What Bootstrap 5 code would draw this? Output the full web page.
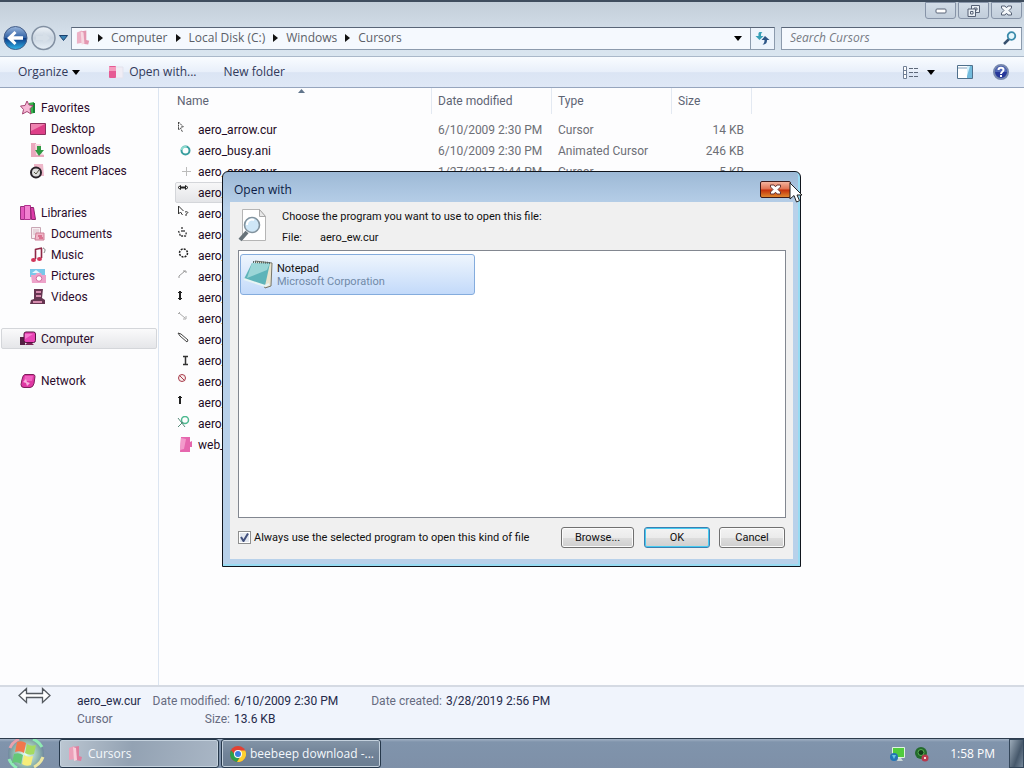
<!DOCTYPE html>
<html lang="en">
<head>
<meta charset="utf-8">
<meta name="viewport" content="width=device-width, initial-scale=1">
<title>Cursors</title>
<link href="https://cdn.jsdelivr.net/npm/bootstrap@5.3.0/dist/css/bootstrap.min.css" rel="stylesheet">
<style>
body{font-family:Roboto,"Open Sans",sans-serif;font-size:12px;line-height:16px;color:#1e1e2c;background:#fdfdfe}
svg{display:block;flex:none}
button{font-family:inherit;white-space:nowrap}
a{color:inherit;text-decoration:none}
.plain-btn{background:none;border:0;padding:0;color:inherit}
.window-top{background:linear-gradient(#c3ced9,#d3dee9 30px,#dae6f0);border-top:2px solid #3f4d5e;height:56px;font-family:"Open Sans",sans-serif}
.caption-row{height:17px;padding-right:2px;gap:2px}
.caption-btn{width:31px;height:17px;border:1px solid #8794a8;border-radius:0 0 3px 3px;background:linear-gradient(#d2dce7,#c2cedb);padding:0}
.nav-row{height:38px;padding:0 2px 0 3px}
.nav-row .plain-btn + .plain-btn{margin-left:3px}
.path-box{height:23px;border:1px solid #8c9bad;border-top-color:#596577;background:#f5f9fe;color:#5b5f68;margin-left:3px}
.path-box nav{gap:8px;margin-left:7px}
.refresh-btn{width:24px;height:21px;border:0;border-left:1px solid #8c9bad;background:#edf4fc;padding:0}
.search-box{width:241px;height:23px;border:1px solid #8c9bad;border-top-color:#596577;background:#f5f9fe;margin-left:6px}
.search-box input{border:0;background:none;outline:0;font-style:italic;min-width:0}
.search-box input::placeholder{color:#777b84;opacity:1}
.tool-row{height:32px;border-top:1px solid #aab8c9;border-bottom:1px solid #96a5bd;background:linear-gradient(#f9fcff,#e8effa 50%,#dbe5f4 52%,#dfe8f6);color:#31395a;padding:0 15px 0 18px;font-family:"Open Sans",sans-serif}
.tool-row .spaced{margin-left:27px}
.tool-row .view-more{margin:0 22px 0 8px}
.side{width:159px;border-right:1px solid #dce5f1;padding-top:9px}
.side a{height:21px;display:flex;align-items:center;gap:5px;padding-left:20px;color:#2c0b2c}
.side a.sub{padding-left:30px}
.side .group{margin-bottom:21px}
.side a.current{background:linear-gradient(#fafafb,#e5e6e9);border:1px solid #d4d6da;border-radius:2px;margin:0 1px;padding-left:18px}
.files{width:583px;table-layout:fixed;border-collapse:separate;border-spacing:0;margin-left:10px;color:#6d6f76}
.files th{height:26px;font-weight:400;padding:0 0 0 6px;border-right:1px solid #e3e9f2;color:#5d6474}
.files th:first-child{padding-left:8px}
.files tbody tr:first-child td{border-top:5px solid transparent;height:26px}
.files td{height:21px;padding:0 0 0 6px;white-space:nowrap}
.files td:last-child{text-align:right;padding-right:8px}
.files td:first-child{color:#1e0a24}
.file-name{height:21px;margin-right:2px;gap:6px;border:1px solid transparent;border-radius:2px}
.file-name.picked{background:linear-gradient(#f7f7f8,#e4e5e8);border-color:#d4d6da}
.sort-mark{top:1px;left:129px}
.details{height:53px;border-top:2px solid #d5dae3;background:#f0f4fc;color:#666b80;padding-left:18px;line-height:18px}
.details b{font-weight:400;color:#252a4a}
.details .facts{display:grid;grid-template-columns:75px 78px 136px 76px auto;grid-auto-rows:18px;white-space:nowrap;padding:5px 0 0 26px}
.taskbar{height:30px;border-top:1px solid #2d3b4d;background:linear-gradient(#a2b1c4,#8094ac 3px,#7e90a8);color:#fff;padding-left:6px;font-family:"Open Sans",sans-serif}
.task{width:160px;height:29px;border:1px solid #26384b;border-radius:3px;box-shadow:inset 0 0 0 1px #c4d1dd;background:linear-gradient(#8495a7,#718398 50%,#6a7d91);color:#f4f8fc;padding:0 8px;gap:4px;margin-right:2px}
.task.active{background:linear-gradient(100deg,#bcc7d2,#93a2b3 45%,#a9b6c5)}
.taskbar time{margin-right:14px}
.peek{width:15px;height:29px;border:1px solid #33465a;background:linear-gradient(110deg,#9cabb9,#46586b 60%,#76889b);padding:0}
.open-with{left:222px;top:171px;width:579px;border:1px solid #10151d;border-radius:6px 6px 0 0;background:linear-gradient(#9db9d6,#b9d1ea 36px,#b8d1ea);padding:0 7px 7px;box-shadow:inset -1px -1px 0 1px #98dcf3}
.open-with header{height:30px;color:#0b1c46;padding:7px 0 0 4px}
.open-with header span{padding-top:3px;font-family:"Open Sans",sans-serif}
.close-btn{width:31px;height:17px;margin:2px 2px 0 0;padding:0;border:1px solid #3f1b1b;border-radius:2px;background:linear-gradient(#f3b39e,#e0704f 48%,#c32e0c 52%,#df872e)}
.dialog-body{background:#f0f0f0;padding:7px 8px 11px;font-size:11px;color:#111}
.intro{height:41px}
.intro-text{padding-left:14px;line-height:21px;margin-top:-3px}
.intro-text span:first-child{width:38px}
.program-list{height:268px;background:#fff;border:1px solid #828790;padding:3px 1px;margin-right:-1px}
.program{width:235px;height:41px;border:1px solid #84acdd;border-radius:3px;background:linear-gradient(#eef5fd,#c3dafa);padding:0 0 0 2px;line-height:13px;text-align:left;color:#111;gap:3px}
.program small{font-size:11px;color:#718aa8}
.actions{padding-top:9px}
.dlg-btn{height:21px;padding:0;border:1px solid #707070;border-radius:3px;background:linear-gradient(#f3f3f3,#ebebeb 50%,#dddddd 52%,#cfcfcf);box-shadow:inset 0 0 0 1px #fbfbfb;width:66px;color:#111}
.dlg-btn.wide{width:73px;margin-right:10px}
.dlg-btn.ok{border-color:#3c7fb1;box-shadow:inset 0 0 0 1px #45cbf1;margin-right:9px}
.tick{appearance:none;width:13px;height:13px;margin:0;border:1px solid #8e8f8f;background:#e9edf3;box-shadow:inset 0 0 0 1px #fff}
.tick:checked{background:#e3e8f0 url("data:image/svg+xml,%3Csvg xmlns='http://www.w3.org/2000/svg' viewBox='0 0 11 11'%3E%3Cpath d='M2 5l2.500 4L9 1.500' fill='none' stroke='%23414f7c' stroke-width='2'/%3E%3C/svg%3E")}
.tick + label{margin-left:3px}
.pointer{left:789px;top:182px}
</style>
<script src="https://cdn.jsdelivr.net/npm/bootstrap@5.3.0/dist/js/bootstrap.bundle.min.js"></script>
</head>
<body class="d-flex flex-column vh-100 overflow-hidden position-relative">
<svg class="d-none">
<symbol id="folder" viewBox="0 0 16 16"><path d="M1 2l5-2 1 13-6 1z" fill="#eca0b9"/><path d="M5 1l6-1v10l3 1-1 4-6-1z" fill="#df7f9f"/><path d="M5 1l3 1 1 12-3 1z" fill="#f8cfdb"/></symbol>
<symbol id="crumb" viewBox="0 0 5 8"><path d="M0 0l5 4-5 4z" fill="#111"/></symbol>
<symbol id="down" viewBox="0 0 8 5"><path d="M0 0h8L4 5z"/></symbol>
</svg>

<div class="window-top flex-shrink-0">
  <div class="caption-row d-flex justify-content-end">
    <button class="caption-btn" aria-label="Minimize"><svg class="mx-auto" width="12" height="7" viewBox="0 0 12 7"><rect x="1" y="2" width="10" height="4" rx="1" fill="#fff" stroke="#5a6578"/></svg></button>
    <button class="caption-btn" aria-label="Restore"><svg class="mx-auto" width="13" height="12" viewBox="0 0 13 12" fill="#e9eff5" stroke="#566175"><path d="M4.500.5h8v7h-8zM7 3h3v2H7z"/><path d="M1 4h7.500v7.500H1zM3.500 6.500H6V9H3.500z"/></svg></button>
    <button class="caption-btn" aria-label="Close"><svg class="mx-auto" width="13" height="11" viewBox="0 0 13 11"><path d="M1.500 1H5l1.500 1.800L8 1h3.500v2L9 5.500 11.500 8v2H8L6.500 8.200 5 10H1.500V8L4 5.500 1.500 3z" fill="#f4f7fa" stroke="#566175"/></svg></button>
  </div>
  <div class="nav-row d-flex align-items-center">
    <button class="plain-btn" aria-label="Back"><svg width="25" height="26" viewBox="0 0 25 26"><defs><linearGradient id="gb" x2="0" y2="1"><stop stop-color="#9bb6dc"/><stop offset=".48" stop-color="#3264a8"/><stop offset=".52" stop-color="#0b3c88"/><stop offset="1" stop-color="#32b6ea"/></linearGradient></defs><circle cx="12.500" cy="13" r="11.500" fill="url(#gb)" stroke="#445e89"/><path d="M4 13l7.500-7 2 2-3 3.200H20v3.600h-9.500l3 3.200-2 2z" fill="#fff"/></svg></button>
    <button class="plain-btn" aria-label="Forward"><svg width="25" height="26" viewBox="0 0 25 26"><defs><linearGradient id="gf" x2="0" y2="1"><stop stop-color="#eef3f8"/><stop offset=".5" stop-color="#c9d4e0"/><stop offset="1" stop-color="#e9f1f8"/></linearGradient></defs><circle cx="12.500" cy="13" r="11.500" fill="url(#gf)" stroke="#8290a2" stroke-width="1.500"/><path d="M19 13l-7-6v4H5v4h7v4z" fill="#d6dfe8"/></svg></button>
    <button class="plain-btn" aria-label="Recent pages"><svg width="9" height="6" viewBox="0 0 9 6"><path d="M.5.5h8l-4 5z" fill="#3983b5" stroke="#19406e"/></svg></button>
    <div class="path-box d-flex align-items-center flex-grow-1">
      <svg width="15" height="16" class="ms-1" opacity=".8"><use href="#folder"/></svg>
      <nav class="d-flex align-items-center" aria-label="Path">
        <svg width="5" height="8"><use href="#crumb"/></svg><a href="#">Computer</a>
        <svg width="5" height="8"><use href="#crumb"/></svg><a href="#">Local Disk (C:)</a>
        <svg width="5" height="8"><use href="#crumb"/></svg><a href="#">Windows</a>
        <svg width="5" height="8"><use href="#crumb"/></svg><a href="#">Cursors</a>
      </nav>
      <button class="plain-btn ms-auto me-2" aria-label="Previous locations"><svg width="8" height="5"><use href="#down"/></svg></button>
      <button class="refresh-btn" aria-label="Refresh"><svg class="mx-auto" width="15" height="14" viewBox="0 0 15 14"><path d="M5.500 1C3 1 3.500 3 3.500 5H.5L4.500 9l4-4H6c0-2 0-3 1.500-4z" fill="#36a0b7"/><path d="M10 5l4.500 4H12c0 3-1 4.500-4.500 4.500C9 12.500 9.500 11 9.500 9H6.500z" fill="#2d5687"/></svg></button>
    </div>
    <div class="search-box d-flex align-items-center">
      <input class="flex-grow-1 ps-2" type="text" placeholder="Search Cursors" aria-label="Search Cursors">
      <svg class="me-1" width="14" height="14" viewBox="0 0 14 14"><path d="M6 8l-5 5" stroke="#37516f" stroke-width="2.500"/><circle cx="8.500" cy="5" r="3.800" fill="#e5f7fd" stroke="#3a8bab" stroke-width="1.800"/></svg>
    </div>
  </div>
</div>

<div class="tool-row d-flex align-items-center flex-shrink-0">
  <button class="plain-btn d-flex align-items-center gap-1">Organize <svg width="8" height="5"><use href="#down"/></svg></button>
  <button class="plain-btn d-flex align-items-center gap-1 spaced"><svg width="18" height="16" viewBox="0 0 18 16"><path d="M8 3h8v11H8z" fill="#f0edf5" stroke="#e3e3ed"/><rect x="2" y="2" width="7" height="12" rx="1" fill="#e65b94"/><path d="M2 3h7v4H2z" fill="#f59cbe"/></svg>Open with...</button>
  <button class="plain-btn spaced">New folder</button>
  <div class="d-flex align-items-center ms-auto">
    <button class="plain-btn" aria-label="Change your view"><svg width="16" height="13" viewBox="0 0 16 13"><path d="M.5.500h3v12h-3zM1 4.500h3M1 8.500h3" fill="#fff" stroke="#718095"/><path d="M6 2.500h4m1 0h4M6 6.500h4m1 0h4M6 10.500h4m1 0h4" stroke="#5d6879"/></svg></button>
    <button class="plain-btn view-more" aria-label="More options"><svg width="8" height="5"><use href="#down"/></svg></button>
    <button class="plain-btn me-3" aria-label="Preview pane"><svg width="16" height="14" viewBox="0 0 16 14"><path d="M.5.500h15v13H.5z" fill="#fff" stroke="#4f708c"/><path d="M1 3h9" stroke="#809fbb"/><path d="M10 1h5v12h-5z" fill="#73bbdc"/><path d="M10 1l3 0-3 10z" fill="#d1effa"/></svg></button>
    <button class="plain-btn ms-1" aria-label="Help"><svg width="16" height="16" viewBox="0 0 16 16"><circle cx="8" cy="8" r="7" fill="#26379a" stroke="#7587ad" stroke-width="2"/><path d="M2 8a6 6 0 0 1 12 0z" fill="#5168b7"/><path d="M5.500 6c0-3 5-3 5 0 0 2-2.500 1.500-2.500 4M8 11v2" fill="none" stroke="#fff" stroke-width="2"/></svg></button>
  </div>
</div>

<main class="d-flex flex-grow-1 overflow-hidden">
  <nav class="side flex-shrink-0" aria-label="Places">
    <div class="group">
      <a href="#"><svg width="16" height="16" viewBox="0 0 16 16"><path d="M9 3l5-1v11l-4 1z" fill="#37b34c"/><path d="M13 3h2v10h-2z" fill="#168334"/><path d="M7 1l2 4 4 .6-3 3.200L11 14l-4-2.500L2.500 14l1-4.500L.5 6 5 5.500z" fill="#f6b9d6" stroke="#a54573"/></svg>Favorites</a>
      <a href="#" class="sub"><svg width="16" height="16" viewBox="0 0 16 16"><path d="M.5 2.500h15v11H.5z" fill="#dd3e87" stroke="#8b315d"/><path d="M1 3h14L1 10z" fill="#ef82b0"/></svg>Desktop</a>
      <a href="#" class="sub"><svg width="16" height="16" viewBox="0 0 16 16"><path d="M1 1h5l1 11 7 1v2H1z" fill="#eaa8be"/><path d="M5 2h6v8l3 3H6z" fill="#f7d5df"/><path d="M7 4h4v4h3l-5 6-4-6h2z" fill="#2f9a43"/></svg>Downloads</a>
      <a href="#" class="sub"><svg width="16" height="16" viewBox="0 0 16 16"><path d="M4 1l9 0 1 12H4z" fill="#eeb7c9"/><circle cx="6" cy="9.500" r="5" fill="#ddd" stroke="#29232a" stroke-width="2"/><path d="M4 9l2 2 3-4" fill="none" stroke="#554"/></svg>Recent Places</a>
    </div>
    <div class="group">
      <a href="#"><svg width="16" height="16" viewBox="0 0 16 16"><path d="M.5 1.500h4v13h-4z" fill="#e459bd" stroke="#97307c"/><path d="M4.500.5h6v14h-6z" fill="#f282d0" stroke="#b43091"/><path d="M10.500 2.500l3 0 2 12-4 0z" fill="#de3ba9" stroke="#8c236c"/></svg>Libraries</a>
      <a href="#" class="sub"><svg width="16" height="16" viewBox="0 0 16 16"><path d="M1.500 1.500h9v11h-9z" fill="#f7eef1" stroke="#c9a6b4"/><path d="M3 4h6M3 6h6M3 8h4" stroke="#d8bbc6"/><path d="M6 7h8v7H5z" fill="#f0b6c7" stroke="#ce7d96"/><path d="M8 10h4M9 12h4" stroke="#c5305b"/></svg>Documents</a>
      <a href="#" class="sub"><svg width="16" height="16" viewBox="0 0 16 16"><path d="M5.500 2v10M11.500 1v10M5 2.500l7-1.500" fill="none" stroke="#8e2745" stroke-width="1.600"/><path d="M13 1c3 1 2 3 1 5" fill="none" stroke="#777"/><ellipse cx="3.500" cy="13" rx="2.500" ry="2" fill="#d0355a"/><ellipse cx="9.500" cy="12" rx="2.500" ry="2" fill="#d0355a"/></svg>Music</a>
      <a href="#" class="sub"><svg width="16" height="16" viewBox="0 0 16 16"><path d="M0 1h15v8H0z" fill="#79c7e9"/><path d="M2 5l4-3 4 3z" fill="#e6f7fd"/><path d="M1 7h4l2-2h4l1 2h4v8H2z" fill="#eda2c9"/><circle cx="9" cy="10.500" r="2.800" fill="#fff" stroke="#d36b9f"/></svg>Pictures</a>
      <a href="#" class="sub"><svg width="16" height="16" viewBox="0 0 16 16"><path d="M4 0h9l-1 9 3 2v4H0l1-4 3-1z" fill="#663651"/><path d="M6 2h5v2H6zM6 6h5v2H6zM3 12h9v2H3z" fill="#d58bad"/></svg>Videos</a>
    </div>
    <div class="group"><a href="#" class="current"><svg width="16" height="16" viewBox="0 0 16 16"><path d="M0 6h5v8H0z" fill="#542043"/><rect x="4" y="1" width="11.500" height="10.500" rx="2" fill="#e843b5" stroke="#57123f"/><path d="M5 14h9l-2-2H7z" fill="#792659"/><path d="M5 3l8 0-8 5z" fill="#f778cf"/></svg>Computer</a></div>
    <div><a href="#"><svg width="16" height="16" viewBox="0 0 16 16"><path d="M5 1.500h8q2 0 2 2l-1 7q-1 4-4 4H4q-3 0-3-3l1-5q1-5 3-5z" fill="#df38a3" stroke="#7d1e5b"/><path d="M5 3h8l-1 5H4z" fill="#f062bf"/><path d="M3 9l3-3 1 3 3 1-3 3-1-3z" fill="#f8b2dd"/></svg>Network</a></div>
  </nav>

  <table class="files mb-auto">
    <colgroup><col style="width:263px"><col style="width:120px"><col style="width:120px"><col style="width:80px"></colgroup>
    <thead><tr><th class="position-relative">Name<svg class="sort-mark position-absolute" width="7" height="4" viewBox="0 0 7 4"><path d="M0 4l3.500-4L7 4z" fill="#61758b"/></svg></th><th>Date modified</th><th>Type</th><th>Size</th></tr></thead>
    <tbody>
      <tr><td><div class="file-name d-flex align-items-center"><svg width="16" height="16" viewBox="0 0 16 16"><path d="M2.500 0v8l2-2 2 4M2.500 0l5 5H5" fill="none" stroke="#444" stroke-dasharray="2 .6"/></svg>aero_arrow.cur</div></td><td>6/10/2009 2:30 PM</td><td>Cursor</td><td>14 KB</td></tr>
      <tr><td><div class="file-name d-flex align-items-center"><svg width="16" height="16" viewBox="0 0 16 16"><circle cx="9.500" cy="7.500" r="4" fill="none" stroke="#389e9f" stroke-width="2"/><path d="M5.500 7a4 4 0 0 1 5-3" fill="none" stroke="#8ddcd0" stroke-width="2"/></svg>aero_busy.ani</div></td><td>6/10/2009 2:30 PM</td><td>Animated Cursor</td><td>246 KB</td></tr>
      <tr><td><div class="file-name d-flex align-items-center"><svg width="16" height="16" viewBox="0 0 16 16"><path d="M10.500 3v9M6 7.500h9" stroke="#bbb"/></svg>aero_cross.cur</div></td><td>1/27/2017 3:44 PM</td><td>Cursor</td><td>5 KB</td></tr>
      <tr><td><div class="file-name picked d-flex align-items-center"><svg width="16" height="16" viewBox="0 0 16 16"><path d="M4 2.500h6" stroke="#222" stroke-width="2"/><path d="M4.500 .5L2 2.500l2.500 2zM9.500.5l2.500 2-2.500 2z" fill="#fff" stroke="#222"/></svg>aero_</div></td><td></td><td></td><td></td></tr>
      <tr><td><div class="file-name d-flex align-items-center"><svg width="16" height="16" viewBox="0 0 16 16"><path d="M2.500 0v8l2-2 2 3M2.500 0l5 5M9 6c3-1 4 1 1 2v2" fill="none" stroke="#333"/></svg>aero_</div></td><td></td><td></td><td></td></tr>
      <tr><td><div class="file-name d-flex align-items-center"><svg width="16" height="16" viewBox="0 0 16 16"><path d="M6 0v5M2.500 4l2 5h5l1-4M8 3v3" fill="none" stroke="#333" stroke-width="1.300" stroke-dasharray="2 1"/></svg>aero_</div></td><td></td><td></td><td></td></tr>
      <tr><td><div class="file-name d-flex align-items-center"><svg width="16" height="16" viewBox="0 0 16 16"><circle cx="7.500" cy="5" r="4" fill="none" stroke="#222" stroke-width="1.500" stroke-dasharray="2 1.100"/></svg>aero_</div></td><td></td><td></td><td></td></tr>
      <tr><td><div class="file-name d-flex align-items-center"><svg width="16" height="16" viewBox="0 0 16 16"><path d="M3 7l6-5M4 8H2m5-6h3v2" fill="none" stroke="#999"/></svg>aero_</div></td><td></td><td></td><td></td></tr>
      <tr><td><div class="file-name d-flex align-items-center"><svg width="16" height="16" viewBox="0 0 16 16"><path d="M4 1v9" stroke="#222" stroke-width="2"/><path d="M2 3l2-2 2 2M2 8l2 2 2-2" fill="none" stroke="#222"/></svg>aero_</div></td><td></td><td></td><td></td></tr>
      <tr><td><div class="file-name d-flex align-items-center"><svg width="16" height="16" viewBox="0 0 16 16"><path d="M3 2l6 5M2 3l2-2m3 7h3V5" fill="none" stroke="#aaa"/></svg>aero_</div></td><td></td><td></td><td></td></tr>
      <tr><td><div class="file-name d-flex align-items-center"><svg width="16" height="16" viewBox="0 0 16 16"><path d="M2 1l3 1 7 6-1 2-7-6z" fill="#fff" stroke="#444"/></svg>aero_</div></td><td></td><td></td><td></td></tr>
      <tr><td><div class="file-name d-flex align-items-center"><svg width="16" height="16" viewBox="0 0 16 16"><path d="M7 3.500h5M7 11.500h5M9.500 4v8" stroke="#333" stroke-width="1.500"/></svg>aero_</div></td><td></td><td></td><td></td></tr>
      <tr><td><div class="file-name d-flex align-items-center"><svg width="16" height="16" viewBox="0 0 16 16"><circle cx="6" cy="4" r="3.500" fill="#f8eeee" stroke="#a83b4a"/><path d="M3.500 1.500l5 5" stroke="#a83b4a"/></svg>aero_</div></td><td></td><td></td><td></td></tr>
      <tr><td><div class="file-name d-flex align-items-center"><svg width="16" height="16" viewBox="0 0 16 16"><path d="M4 1v8" stroke="#222" stroke-width="2"/><path d="M2 3l2-2 2 2" fill="none" stroke="#222"/></svg>aero_</div></td><td></td><td></td><td></td></tr>
      <tr><td><div class="file-name d-flex align-items-center"><svg width="16" height="16" viewBox="0 0 16 16"><circle cx="9" cy="4" r="3.500" fill="none" stroke="#4db990" stroke-width="1.500"/><path d="M2 2l7 9M2 11l5-5" stroke="#568a79"/></svg>aero_</div></td><td></td><td></td><td></td></tr>
      <tr><td><div class="file-name d-flex align-items-center"><svg width="16" height="16" viewBox="0 0 16 16"><path d="M5 0h9v5l2-1v6h-2v5H4z" fill="#e667ae"/><path d="M5 1l5 1-2 10-4 1z" fill="#f39acb"/></svg>web_</div></td><td></td><td></td><td></td></tr>
    </tbody>
  </table>
</main>

<section class="details d-flex flex-shrink-0" aria-label="Details">
  <svg width="33" height="18" viewBox="0 0 33 18"><path d="M1 8.500L8.500 1.500v5h16v-5L32 8.500l-7.500 7v-5h-16v5z" fill="#fff" stroke="#555a60" stroke-width="1.300"/></svg>
  <div class="facts"><b>aero_ew.cur</b><span class="text-end">Date modified:</span><b class="ps-1">6/10/2009 2:30 PM</b><span class="text-end">Date created:</span><b class="ps-1">3/28/2019 2:56 PM</b><span>Cursor</span><span class="text-end">Size:</span><b class="ps-1">13.6 KB</b></div>
</section>

<footer class="taskbar d-flex align-items-center flex-shrink-0">
  <button class="plain-btn me-2" aria-label="Start"><svg width="45" height="29" viewBox="0 0 45 29"><defs><radialGradient id="orb"><stop stop-color="#e8fff4"/><stop offset=".7" stop-color="#90b7af"/><stop offset="1" stop-color="#70899e"/></radialGradient></defs><circle cx="20" cy="15" r="18" fill="url(#orb)"/><path d="M4 9A18 18 0 0 1 13 0" fill="none" stroke="#e9a1ad" stroke-width="3"/><path d="M27 0a18 18 0 0 1 9 8M3 20a18 18 0 0 0 8 9" fill="none" stroke="#8eebb4" stroke-width="3"/><path d="M37 18a18 18 0 0 1-9 10" fill="none" stroke="#ece6a2" stroke-width="3"/><path d="M11 3q5-2 9 1l-2 10q-4-3-9-1z" fill="#f2774c"/><path d="M21 5q4 3 9 1l-2 9q-5 2-9-1z" fill="#a5db61"/><path d="M8 15q5-2 9 1l-2 9q-4-3-9-1z" fill="#65c777"/><path d="M18 16q4 3 9 1l-2 9q-5 2-9-1z" fill="#f5ed79"/></svg></button>
  <button class="task active d-flex align-items-center"><svg width="16" height="16"><use href="#folder"/></svg><span>Cursors</span></button>
  <button class="task d-flex align-items-center"><svg width="16" height="16" viewBox="0 0 16 16"><circle cx="8" cy="8" r="8" fill="#e34133"/><path d="M1 4.200A8 8 0 0 0 7 16l4-7H5z" fill="#2ca14c"/><path d="M15.200 4.500A8 8 0 0 1 7 16l4.500-7L9 4.500z" fill="#fbd12f"/><circle cx="8" cy="8" r="4" fill="#fff"/><circle cx="8" cy="8" r="3" fill="#3c7de0"/></svg><span>beebeep download -...</span></button>
  <div class="d-flex align-items-center ms-auto">
    <svg width="16" height="16" viewBox="0 0 16 16"><path d="M2.500 1.500h12v10h-12z" fill="#50cc3d" stroke="#e0f4e0"/><path d="M8 12h3l2 3H7z" fill="#c9d8d7"/><circle cx="4" cy="11" r="4" fill="#2475b6"/><path d="M2 9l4 0-2 4z" fill="#68c5e1"/></svg>
    <svg class="ms-2 me-3" width="16" height="16" viewBox="0 0 16 16"><circle cx="7" cy="7" r="6" fill="#236b2c"/><circle cx="7" cy="6.500" r="3" fill="#123b19" stroke="#5bb355"/><circle cx="11" cy="12" r="3.500" fill="#b83a4e"/><path d="M10 11l2 2m0-2l-2 2" stroke="#f6d7d7"/></svg>
    <time class="ms-1">1:58 PM</time>
    <button class="peek" aria-label="Show desktop"></button>
  </div>
</footer>

<div class="open-with position-absolute" role="dialog" aria-labelledby="dlg-title">
  <header class="d-flex align-items-start justify-content-between"><span id="dlg-title">Open with</span><button class="close-btn" aria-label="Close dialog"><svg class="mx-auto" width="13" height="11" viewBox="0 0 13 11"><path d="M1.500 1H5l1.500 1.800L8 1h3.500v2L9 5.500 11.500 8v2H8L6.500 8.200 5 10H1.500V8L4 5.500 1.500 3z" fill="#fff" stroke="#6b3734"/></svg></button></header>
  <div class="dialog-body">
    <div class="intro d-flex">
      <svg width="30" height="34" viewBox="0 0 30 34"><path d="M4.500.5h17l6 7v24h-23z" fill="#fff" stroke="#b5b5b5"/><path d="M21.500.5v7h6z" fill="#e8e8e8" stroke="#a8a8a8"/><path d="M9 23l-7 8" stroke="#68737a" stroke-width="4"/><circle cx="14" cy="16" r="7.500" fill="#cfe7f7" stroke="#82939e" stroke-width="1.600"/><path d="M9 16a5 5 0 0 1 7-5" fill="none" stroke="#fff" stroke-width="2"/></svg>
      <div class="intro-text"><div>Choose the program you want to use to open this file:</div><div class="d-flex"><span>File:</span><span>aero_ew.cur</span></div></div>
    </div>
    <div class="program-list">
      <button class="program d-flex align-items-center"><svg width="31" height="31" viewBox="0 0 31 31"><path d="M12 2l17 2-1 23-6 2z" fill="#e9e3cd" stroke="#77766a"/><path d="M9 4l18 0-5 23L1 20z" fill="#5eb4b9"/><path d="M9 4l18 0-3 7L4 19z" fill="#9bd6d7"/><path d="M1 20l21 7 4-2" fill="none" stroke="#e7f4f4" stroke-width="2"/><path d="M10 3l18 1" stroke="#566" stroke-width="2" stroke-dasharray="1 1"/></svg><span>Notepad<br><small>Microsoft Corporation</small></span></button>
    </div>
    <div class="actions d-flex align-items-center">
      <input class="tick" type="checkbox" id="always" checked><label for="always">Always use the selected program to open this kind of file</label>
      <button class="dlg-btn wide ms-auto">Browse...</button><button class="dlg-btn ok">OK</button><button class="dlg-btn">Cancel</button>
    </div>
  </div>
</div>
<svg class="pointer position-absolute" width="14" height="22" viewBox="0 0 14 22"><path d="M1 1v16l4-3.500L7.500 20l3-1.300L8 13h5z" fill="#fff" stroke="#222"/></svg>
</body>
</html>
